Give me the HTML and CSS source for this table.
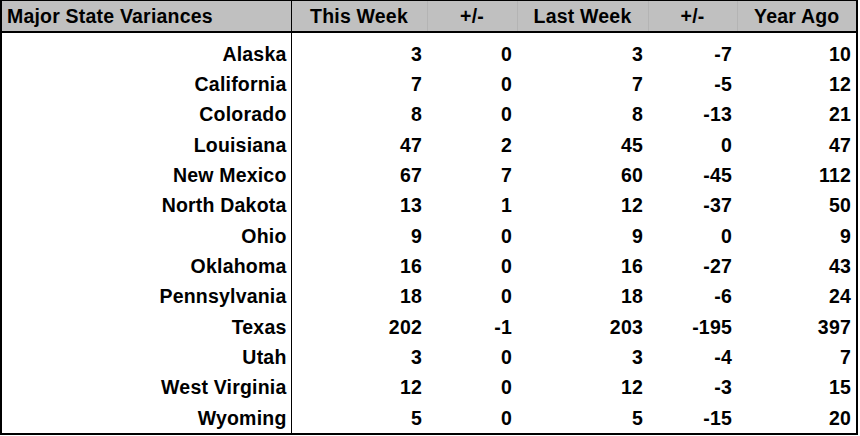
FILE: index.html
```html
<!DOCTYPE html>
<html lang="en">
<head>
  <meta charset="UTF-8" />
  <meta name="viewport" content="width=device-width, initial-scale=1.0" />
  <title>Major State Variances</title>
  <link rel="stylesheet" href="styles.css">
</head>
<body>
  <div class="sheet">
    <table class="variances">
      <colgroup>
        <col class="col-state">
        <col class="col-this">
        <col class="col-diff1">
        <col class="col-last">
        <col class="col-diff2">
        <col class="col-year">
      </colgroup>
      <thead>
        <tr>
          <th class="state">Major State Variances</th>
          <th>This Week</th>
          <th>+/-</th>
          <th>Last Week</th>
          <th>+/-</th>
          <th>Year Ago</th>
        </tr>
      </thead>
      <tbody>
        <tr><td class="state">Alaska</td><td>3</td><td>0</td><td>3</td><td>-7</td><td>10</td></tr>
        <tr><td class="state">California</td><td>7</td><td>0</td><td>7</td><td>-5</td><td>12</td></tr>
        <tr><td class="state">Colorado</td><td>8</td><td>0</td><td>8</td><td>-13</td><td>21</td></tr>
        <tr><td class="state">Louisiana</td><td>47</td><td>2</td><td>45</td><td>0</td><td>47</td></tr>
        <tr><td class="state">New Mexico</td><td>67</td><td>7</td><td>60</td><td>-45</td><td>112</td></tr>
        <tr><td class="state">North Dakota</td><td>13</td><td>1</td><td>12</td><td>-37</td><td>50</td></tr>
        <tr><td class="state">Ohio</td><td>9</td><td>0</td><td>9</td><td>0</td><td>9</td></tr>
        <tr><td class="state">Oklahoma</td><td>16</td><td>0</td><td>16</td><td>-27</td><td>43</td></tr>
        <tr><td class="state">Pennsylvania</td><td>18</td><td>0</td><td>18</td><td>-6</td><td>24</td></tr>
        <tr><td class="state">Texas</td><td>202</td><td>-1</td><td>203</td><td>-195</td><td>397</td></tr>
        <tr><td class="state">Utah</td><td>3</td><td>0</td><td>3</td><td>-4</td><td>7</td></tr>
        <tr><td class="state">West Virginia</td><td>12</td><td>0</td><td>12</td><td>-3</td><td>15</td></tr>
        <tr><td class="state">Wyoming</td><td>5</td><td>0</td><td>5</td><td>-15</td><td>20</td></tr>
      </tbody>
    </table>
  </div>
</body>
</html>
```

FILE: styles.css
```css
body {
  margin: 0;
  background-color: #ffffff;
  font-family: "Liberation Sans", Arial, sans-serif;
  color: #000000;
}

.sheet {
  width: 858px;
  height: 435px;
  box-sizing: border-box;
  border: 2px solid #000000;
  border-top-width: 1px;
}

.variances {
  width: 100%;
  border-collapse: collapse;
  table-layout: fixed;
  font-size: 19.5px;
  font-weight: bold;
  letter-spacing: 0.2px;
}

.col-state { width: 289px; }
.col-this { width: 136px; }
.col-diff1 { width: 90px; }
.col-last { width: 131px; }
.col-diff2 { width: 89px; }
.col-year { width: 119px; }

.variances th {
  background-color: #c0c0c0;
  height: 29px;
  padding: 1px 0 0 0;
  text-align: center;
  font-weight: bold;
  border-bottom: 2px solid #000000;
  border-left: 1px solid #b4b4b4;
  white-space: nowrap;
}

.variances th.state {
  text-align: left;
  padding-left: 5px;
  border-left: none;
}

.variances td {
  height: 30.33px;
  padding: 0 5px 0 0;
  text-align: right;
  vertical-align: middle;
}

.variances tbody tr:first-child td {
  padding-top: 6px;
}

.variances .state {
  border-right: 1px solid #000000;
}

.variances td.state {
  padding-right: 4px;
}
```
